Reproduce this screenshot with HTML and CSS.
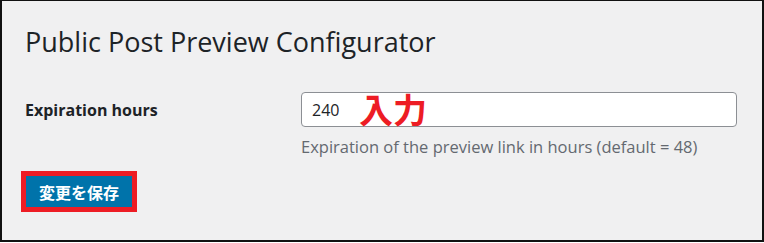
FILE: index.html
```html
<!DOCTYPE html>
<html lang="ja">
<head>
    <meta charset="UTF-8">
    <meta name="viewport" content="width=device-width, initial-scale=1.0">
    <title>Public Post Preview Configurator</title>
    <link rel="stylesheet" href="styles.css">
</head>
<body>
    <div class="frame">
        <h1 class="page-title">Public Post Preview Configurator</h1>

        <form class="settings-form">
            <div class="form-row">
                <label class="row-label" for="expiration">Expiration hours</label>
                <div class="row-field">
                    <div class="input-wrap">
                        <input id="expiration" class="text-input" type="text" value="240">
                        <!-- annotation stamped over the screenshot -->
                        <span class="note">入力</span>
                    </div>
                    <p class="description">Expiration of the preview link in hours (default = 48)</p>
                </div>
            </div>

            <div class="submit-row">
                <span class="highlight">
                    <button class="button-primary" type="submit">変更を保存</button>
                </span>
            </div>
        </form>
    </div>
</body>
</html>
```

FILE: styles.css
```css
html, body {
    margin: 0;
    background-color: #fff;
}

.frame {
    box-sizing: border-box;
    width: 764px;
    height: 242px;
    border: 2px solid #111;
    border-top-width: 1px;
    background-color: #f0f0f1;
    padding: 0 23px;
    font-family: "Open Sans", "Noto Sans CJK JP", sans-serif;
    color: #1d2327;
}

.page-title {
    margin: 0;
    padding-top: 23px;
    font-size: 27px;
    font-weight: 400;
    line-height: 1.3;
}

.settings-form {
    margin-top: 33px;
}

.form-row {
    display: grid;
    grid-template-columns: 276px 436px;
}

.row-label {
    padding-top: 7px;
    font-size: 16px;
    font-weight: 700;
}

.input-wrap {
    position: relative;
}

.text-input {
    box-sizing: border-box;
    width: 436px;
    height: 35px;
    margin: 0;
    padding: 0 10px;
    border: 1px solid #8c8f94;
    border-radius: 4px;
    background-color: #fff;
    font-family: "Open Sans", sans-serif;
    font-size: 16px;
    color: #1d2327;
}

.note {
    position: absolute;
    left: 58px;
    top: 0;
    font-family: "Noto Sans CJK JP", sans-serif;
    font-size: 34px;
    font-weight: 700;
    line-height: 1;
    color: #ed1c24;
}

.description {
    margin: 8px 0 0;
    font-size: 16.5px;
    color: #646970;
}

.submit-row {
    margin-top: 13px;
}

.highlight {
    display: inline-block;
    border: 5px solid #ed1c24;
    margin-left: -4px;
}

.button-primary {
    display: block;
    width: 106px;
    height: 31px;
    margin: 0;
    padding: 0;
    border: none;
    background-color: #0073aa;
    font-family: "Noto Sans CJK JP", sans-serif;
    font-size: 16px;
    font-weight: 700;
    color: #fff;
}
```
